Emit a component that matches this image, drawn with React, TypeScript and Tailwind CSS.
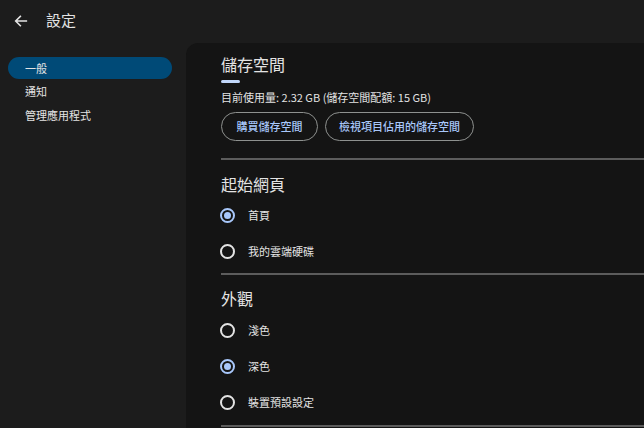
import React from 'react';

const font = { fontFamily: '"Noto Sans CJK TC", "Noto Sans", sans-serif' };

const Radio = ({ checked, label }: { checked?: boolean; label: string }) => (
  <div className="flex h-[36px] items-center">
    <div
      className={`ml-[-1px] flex h-[15px] w-[15px] items-center justify-center rounded-full border-2 ${
        checked ? 'border-[#a8c7fa]' : 'border-[#e3e3e3]'
      }`}
    >
      {checked && <div className="h-[7px] w-[7px] rounded-full bg-[#a8c7fa]" />}
    </div>
    <span className="ml-[13px] text-[11px] text-[#e3e3e3]">{label}</span>
  </div>
);

const Divider = () => <div className="h-[2px] w-full bg-[#5c5c5c]" />;

export default function App() {
  return (
    <div className="flex h-[428px] w-[644px] flex-col overflow-hidden bg-[#1c1c1c] text-[#e3e3e3]" style={font}>
      {/* Header */}
      <div className="flex h-[43px] shrink-0 items-center pb-[2px]">
        <svg className="ml-[13px] h-[16px] w-[16px]" viewBox="0 0 24 24" fill="none" stroke="#e3e3e3" strokeWidth="2.4" strokeLinecap="square">
          <path d="M20 12H5M11 5l-7 7 7 7" />
        </svg>
        <span className="ml-[17px] text-[15px]">設定</span>
      </div>

      <div className="flex flex-1">
        {/* Sidebar */}
        <div className="w-[186px] shrink-0 pl-[8px] pr-[14px] pt-[14px]">
          <div className="flex h-[22px] items-center rounded-full bg-[#004a77] pl-[17px] text-[11px]">一般</div>
          <div className="flex h-[24px] items-center pl-[17px] text-[11px]">通知</div>
          <div className="flex h-[24px] items-center pl-[17px] text-[11px]">管理應用程式</div>
        </div>

        {/* Content */}
        <div className="flex-1 rounded-tl-[12px] bg-[#141414] pl-[35px] pt-[9px]">
          <div className="text-[16px] leading-[24px]">儲存空間</div>
          <div className="mt-[4px] h-[3px] w-[19px] rounded-full bg-[#c2d7fa]" />
          <div className="mt-[6px] text-[11px] leading-[16px]">目前使用量: 2.32 GB (儲存空間配額: 15 GB)</div>
          <div className="mt-[7px] flex gap-[7px]">
            <button className="h-[29px] w-[97px] rounded-full border border-[#8e918f] text-[11px] font-medium text-[#a8c7fa]">購買儲存空間</button>
            <button className="h-[29px] w-[149px] rounded-full border border-[#8e918f] text-[11px] font-medium text-[#a8c7fa]">檢視項目佔用的儲存空間</button>
          </div>
          <div className="mt-[17px]">
            <Divider />
          </div>

          <div className="mt-[12px] text-[16px] leading-[24px]">起始網頁</div>
          <div className="mt-[1px]">
            <Radio checked label="首頁" />
            <Radio label="我的雲端硬碟" />
          </div>
          <div className="mt-[4px]">
            <Divider />
          </div>

          <div className="mt-[11px] text-[16px] leading-[24px]">外觀</div>
          <div className="mt-[2px]">
            <Radio label="淺色" />
            <Radio checked label="深色" />
            <Radio label="裝置預設設定" />
          </div>
          <div className="mt-[5px]">
            <Divider />
          </div>
        </div>
      </div>
    </div>
  );
}
